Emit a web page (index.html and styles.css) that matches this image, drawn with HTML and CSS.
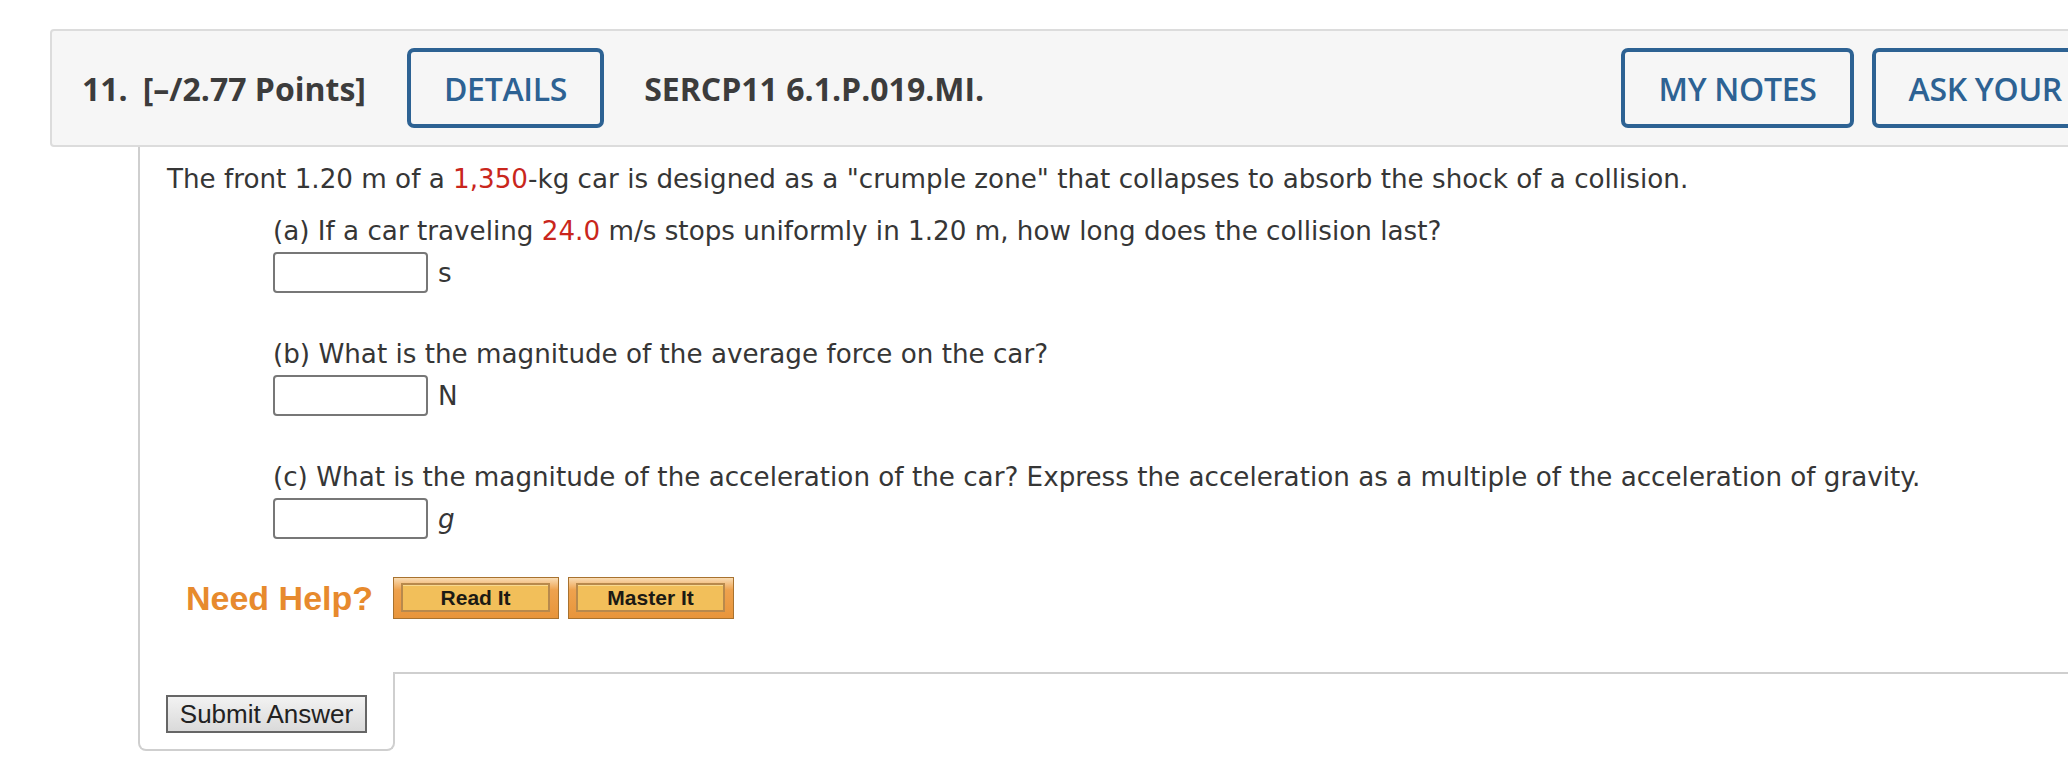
FILE: index.html
```html
<!DOCTYPE html>
<html lang="en">
<head>
    <meta charset="UTF-8">
    <title>SERCP11 6.1.P.019.MI.</title>
    <link rel="stylesheet" href="styles.css">
</head>
<body>

<div class="question">
    <!-- question header -->
    <div class="q-header">
        <span class="q-num">11.</span>
        <span class="q-points">[&ndash;/2.77 Points]</span>
        <button class="outline-btn details-btn">DETAILS</button>
        <span class="q-code">SERCP11 6.1.P.019.MI.</span>
        <div class="q-actions">
            <button class="outline-btn">MY NOTES</button>
            <button class="outline-btn">ASK YOUR</button>
        </div>
    </div>

    <!-- question body -->
    <div class="q-body">
        <p class="q-text">The front 1.20 m of a <span class="red">1,350</span>-kg car is designed as a "crumple zone" that collapses to absorb the shock of a collision.</p>

        <div class="part">
            <p class="q-text">(a) If a car traveling <span class="red">24.0</span> m/s stops uniformly in 1.20 m, how long does the collision last?</p>
            <div class="answer-row">
                <input type="text" class="answer">
                <span class="unit">s</span>
            </div>
        </div>

        <div class="part">
            <p class="q-text">(b) What is the magnitude of the average force on the car?</p>
            <div class="answer-row">
                <input type="text" class="answer">
                <span class="unit">N</span>
            </div>
        </div>

        <div class="part">
            <p class="q-text">(c) What is the magnitude of the acceleration of the car? Express the acceleration as a multiple of the acceleration of gravity.</p>
            <div class="answer-row">
                <input type="text" class="answer">
                <span class="unit unit-g">g</span>
            </div>
        </div>

        <div class="need-help">
            <span class="need-help-label">Need Help?</span>
            <span class="help-btn"><span class="help-btn-inner">Read It</span></span>
            <span class="help-btn"><span class="help-btn-inner">Master It</span></span>
        </div>
    </div>

    <!-- submit area -->
    <div class="q-footer">
        <div class="submit-tab">
            <button class="submit-btn">Submit Answer</button>
        </div>
        <div class="footer-rest"></div>
    </div>
</div>

</body>
</html>
```

FILE: styles.css
```css
html, body {
    margin: 0;
    padding: 0;
    overflow: hidden;
    background: #fff;
}

.question {
    width: 2081px;
    padding: 29px 0 0 50px;
}

/* header */
.q-header {
    display: flex;
    align-items: center;
    background-color: #f6f6f6;
    border: 2px solid #dcdcdc;
    border-radius: 4px;
    padding: 17px 30px 17px 30px;
    font-family: 'Open Sans', 'Liberation Sans', sans-serif;
    color: #3c3c3c;
}

.q-num, .q-points, .q-code {
    font-size: 32px;
    font-weight: 700;
}

.q-num {
    margin-right: 15px;
}

.details-btn {
    margin: 0 40px 0 41px;
}

.outline-btn {
    height: 80px;
    padding: 0 33px;
    background: transparent;
    border: 4px solid #2d6293;
    border-radius: 7px;
    color: #2d6293;
    font-family: 'Open Sans', 'Liberation Sans', sans-serif;
    font-size: 32px;
    font-weight: 600;
    letter-spacing: -0.3px;
    white-space: nowrap;
    cursor: pointer;
}

.q-actions {
    margin-left: auto;
    display: flex;
    gap: 18px;
}

/* body */
.q-body {
    margin-left: 88px;
    border-left: 2px solid #cfcfcf;
    padding: 14px 0 53px 27px;
    font-family: 'DejaVu Sans', Verdana, sans-serif;
    font-size: 26.2px;
    color: #363636;
}

.q-text {
    margin: 0;
    line-height: 36px;
}

.red {
    color: #c9261c;
}

.part {
    margin: 16px 0 0 106px;
}

.part + .part {
    margin-top: 43px;
}

.answer-row {
    display: flex;
    align-items: center;
    gap: 10px;
    margin-top: 3px;
}

.answer {
    width: 155px;
    height: 41px;
    box-sizing: border-box;
    border: 2px solid #777;
    border-radius: 4px;
    margin: 0;
}

.unit {
    line-height: 36px;
}

.unit-g {
    font-style: italic;
}

/* need help */
.need-help {
    display: flex;
    align-items: center;
    margin: 38px 0 0 19px;
    font-family: 'Liberation Sans', Arial, sans-serif;
}

.need-help-label {
    color: #e78a2d;
    font-size: 34px;
    font-weight: 700;
    margin-right: 20px;
}

.help-btn {
    display: flex;
    width: 166px;
    height: 42px;
    box-sizing: border-box;
    padding: 5px 8px 6px 7px;
    border: 1px solid #a8722f;
    background: linear-gradient(#f9dcb4 0%, #eea24e 30%, #e8953b 100%);
    margin-right: 9px;
}

.help-btn-inner {
    flex: 1;
    display: flex;
    align-items: center;
    justify-content: center;
    border: 2px solid #b8894c;
    box-shadow: inset 0 1px 0 #f8d98f;
    background: #f2bf5a;
    color: #1c1a14;
    font-size: 21px;
    font-weight: 700;
}

/* footer */
.q-footer {
    display: flex;
    margin-left: 88px;
}

.submit-tab {
    border: 2px solid #cfcfcf;
    border-top: none;
    border-radius: 0 0 8px 8px;
    padding: 23px 26px 16px 26px;
}

.submit-btn {
    width: 201px;
    height: 38px;
    padding: 0;
    border: 2px solid #666;
    background: linear-gradient(#f2f2f2, #dadada);
    font-family: 'Liberation Sans', Arial, sans-serif;
    font-size: 26px;
    color: #222;
    cursor: pointer;
}

.footer-rest {
    flex: 1;
    border-top: 2px solid #cfcfcf;
}
```
